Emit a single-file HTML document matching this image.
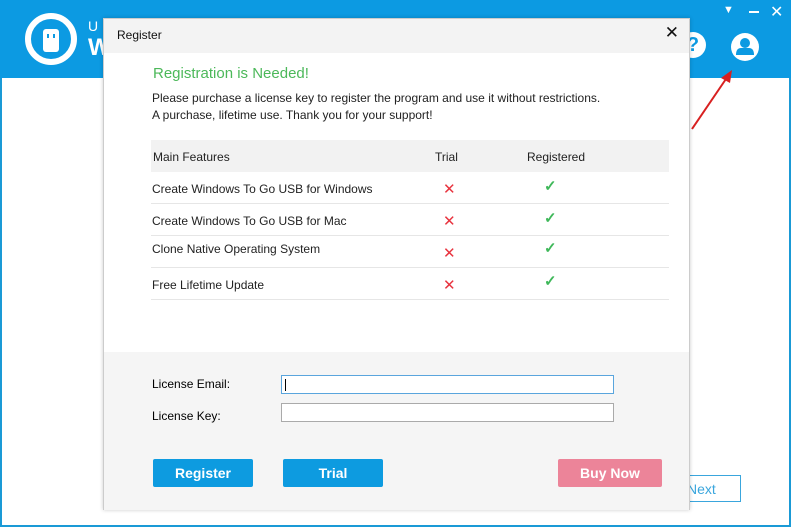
<!DOCTYPE html><html><head><style>
*{margin:0;padding:0;box-sizing:border-box}
body{width:791px;height:527px;overflow:hidden;background:#fff;font-family:"Liberation Sans",sans-serif;position:relative}
.hdr{position:absolute;left:0;top:0;width:791px;height:78px;background:#0c9ae2}
.frame{position:absolute;left:0;top:78px;width:791px;height:449px;border:2px solid #1a9ad6;border-top:none}
.dlg{position:absolute;left:103px;top:18px;width:587px;height:492px;background:#fff;border:1px solid #ccc;box-shadow:0 0 4px rgba(0,0,0,.2)}
.tb{height:34px;background:#f3f3f3;font-size:12px;padding:9px 0 0 13px;color:#111}
.abs{position:absolute}
.row{position:absolute;left:47px;width:518px;height:32px;border-bottom:1px solid #e6e6e6;font-size:12px;color:#222}
.row span{position:absolute;top:10px}
.x{color:#e8343f;font-size:15px}
.ck{color:#3fb85a;font-size:15px;font-weight:bold}
.btn{position:absolute;top:440px;width:100px;height:28px;border-radius:2px;color:#fff;font-weight:bold;font-size:14px;text-align:center;line-height:28px}
</style></head><body>
<div class="hdr"></div>
<div class="frame"></div>
<svg class="abs" style="left:24px;top:12px" width="54" height="54"><circle cx="27" cy="27" r="23" fill="none" stroke="#fff" stroke-width="6"/><rect x="19" y="17" width="16" height="23" rx="3" fill="#fff"/><rect x="23" y="22" width="2" height="4" fill="#0c9ae2"/><rect x="29" y="22" width="2" height="4" fill="#0c9ae2"/></svg>
<div class="abs" style="left:88px;top:18px;color:#fff;font-size:14px">U</div>
<div class="abs" style="left:88px;top:34px;color:#fff;font-size:24px;font-weight:bold">W</div>
<div class="abs" style="left:723px;top:4px;color:#fff;font-size:11px">▼</div>
<div class="abs" style="left:749px;top:11px;width:10px;height:2px;background:#fff"></div>
<div class="abs" style="left:770px;top:2px;color:#fff;font-size:16px">✕</div>
<svg class="abs" style="left:730px;top:32px" width="30" height="30"><circle cx="15" cy="15" r="14" fill="#fff"/><circle cx="15" cy="11" r="5" fill="#0c9ae2"/><path d="M6 23 Q6 16 11 16 L19 16 Q24 16 24 23Z" fill="#0c9ae2"/></svg>
<div class="abs" style="left:680px;top:32px;width:26px;height:26px;border-radius:50%;background:#fff;color:#0c9ae2;font-weight:bold;font-size:20px;text-align:center;line-height:26px">?</div>
<svg class="abs" style="left:688px;top:68px" width="50" height="65"><line x1="4" y1="61" x2="40" y2="8" stroke="#d82020" stroke-width="2"/><path d="M44 2 L33 10 L42 15Z" fill="#d82020"/></svg>
<div class="abs" style="left:686px;top:475px;width:55px;height:27px;border:1px solid #3aa6dd;color:#3aa6dd;font-size:14px;padding:5px 0 0 0">Next</div>
<div class="dlg">
<div class="tb">Register<span style="position:absolute;right:10px;top:4px;font-size:17px">✕</span></div>
<div class="abs" style="left:49px;top:46px;color:#4cb85a;font-size:15px">Registration is Needed!</div>
<div class="abs" style="left:48px;top:71px;font-size:12px;color:#222;line-height:17px">Please purchase a license key to register the program and use it without restrictions.<br>A purchase, lifetime use. Thank you for your support!</div>
<div class="row" style="top:121px;background:#f2f2f2;border:none"><span style="left:2px">Main Features</span><span style="left:284px">Trial</span><span style="left:376px">Registered</span></div>
<div class="row" style="top:153px"><span style="left:1px">Create Windows To Go USB for Windows</span><span class="x" style="left:292px;top:8px">✕</span><span class="ck" style="left:393px;top:5px">✓</span></div>
<div class="row" style="top:185px"><span style="left:1px">Create Windows To Go USB for Mac</span><span class="x" style="left:292px;top:8px">✕</span><span class="ck" style="left:393px;top:5px">✓</span></div>
<div class="row" style="top:217px"><span style="left:1px;top:6px">Clone Native Operating System</span><span class="x" style="left:292px;top:8px">✕</span><span class="ck" style="left:393px;top:3px">✓</span></div>
<div class="row" style="top:249px"><span style="left:1px;top:10px">Free Lifetime Update</span><span class="x" style="left:292px;top:8px">✕</span><span class="ck" style="left:393px;top:4px">✓</span></div>
<div class="abs" style="left:0;top:333px;width:585px;height:158px;background:#f5f5f5"></div>
<div class="abs" style="left:48px;top:358px;font-size:12px">License Email:</div>
<div class="abs" style="left:48px;top:390px;font-size:12px">License Key:</div>
<div class="abs" style="left:177px;top:356px;width:333px;height:19px;border:1px solid #5aa5dd;background:#fff"><div style="width:1px;height:12px;background:#000;margin:3px 0 0 3px"></div></div>
<div class="abs" style="left:177px;top:384px;width:333px;height:19px;border:1px solid #aaa;background:#fff"></div>
<div class="btn" style="left:49px;background:#0d9be0">Register</div>
<div class="btn" style="left:179px;background:#0d9be0">Trial</div>
<div class="btn" style="left:454px;background:#ec8499;width:104px">Buy Now</div>
</div>
</body></html>
